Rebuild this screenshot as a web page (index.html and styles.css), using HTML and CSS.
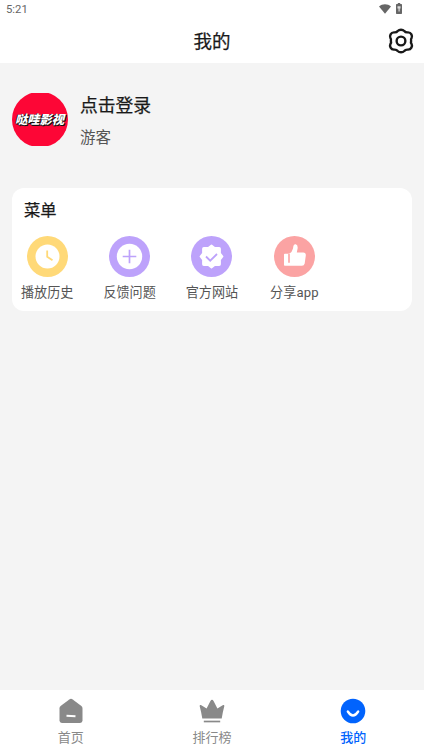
FILE: index.html
```html
<!DOCTYPE html>
<html lang="zh-CN">
<head>
<meta charset="utf-8">
<title>我的</title>
<link rel="stylesheet" href="styles.css">
</head>
<body>
<div class="app">
  <header class="top">
    <div class="status">
      <span class="time">5:21</span>
      <svg class="wifi" width="12" height="10" viewBox="0 0 12 10"><path d="M0 2.400C3.400-.5 8.600-.5 12 2.400L6 9.800z"/></svg>
      <svg class="battery" width="6" height="11" viewBox="0 0 6 11"><path d="M1.800 0h2.400v1H5.300q.7 0 .7.700v8.600q0 .7-.7.700H.7q-.7 0-.7-.7V1.700Q0 1 .7 1H1.800z"/><path class="bolt" d="M1.500 3.200h3v2.300h-.8v2.900H2.500V5.500h-1z"/></svg>
    </div>
    <div class="bar">
      <h1>我的</h1>
      <svg class="gear" width="26" height="26" viewBox="0.500 0.500 25 25"><path d="M9.800 3.400Q11 2.200 13 2.200T16.200 3.400Q17.300 5 19.800 4.700Q22 4.700 23 6.600T23.200 10Q22.200 11.500 22.700 13Q22.200 14.500 23.200 16Q24 17.500 23 19.400T19.800 21.300Q17.300 21 16.200 22.600Q15 23.800 13 23.800T9.800 22.600Q8.700 21 6.200 21.300Q4 21.300 3 19.400T2.800 16Q3.800 14.500 3.300 13Q3.800 11.500 2.800 10Q2 8.500 3 6.600T6.200 4.700Q8.700 5 9.800 3.400z"/><circle cx="13" cy="13" r="4.200"/></svg>
    </div>
  </header>

  <main>
    <section class="profile">
      <div class="avatar"><span>哒哇影视</span></div>
      <div class="user">
        <div class="login">点击登录</div>
        <div class="guest">游客</div>
      </div>
    </section>

    <section class="card">
      <h2>菜单</h2>
      <div class="menu">
        <div class="item">
          <svg class="icon" viewBox="0 0 41 41"><circle cx="20.500" cy="20.500" r="20.500" fill="#ffd978"/><circle cx="20.500" cy="20.500" r="12" fill="#fff"/><path d="M20.200 14.500v6.200l5.300 3.500" fill="none" stroke="#ffd978" stroke-width="1.800"/></svg>
          <span>播放历史</span>
        </div>
        <div class="item">
          <svg class="icon" viewBox="0 0 41 41"><circle cx="20.500" cy="20.500" r="20.500" fill="#bda2fb"/><circle cx="20.500" cy="20.500" r="12.700" fill="#fff"/><path d="M20.500 13.700v13.600M13.700 20.500h13.600" fill="none" stroke="#bda2fb" stroke-width="1.700"/></svg>
          <span>反馈问题</span>
        </div>
        <div class="item">
          <svg class="icon" viewBox="0 0 41 41"><circle cx="20.500" cy="20.500" r="20.500" fill="#bda2fb"/><path d="M20.500 9.500l3.200 2.500h4.500q.8 0 .8.800v4.500l2.500 3.200-2.500 3.200v4.500q0 .8-.8.800h-4.500l-3.200 2.500-3.200-2.500h-4.500q-.8 0-.8-.8v-4.500l-2.500-3.200 2.500-3.200v-4.500q0-.8.800-.8h4.500z" fill="#fff" stroke="#fff" stroke-width="1.800" stroke-linejoin="round"/><path d="M15 20.500l4.200 4.200 6.800-6.700" fill="none" stroke="#bda2fb" stroke-width="1.800"/></svg>
          <span>官方网站</span>
        </div>
        <div class="item">
          <svg class="icon" viewBox="0 0 41 41"><circle cx="20.500" cy="20.500" r="20.500" fill="#fba3a3"/><path d="M10 18.600q0-.8.800-.8h4.400q2.800-1.300 3.800-5.300l.4-2.500q.5-2.200 2.300-1.800 2.400.6 1.900 4.400l-.8 3.800h6.500q2.800.1 2.500 3.200l-1.100 8q-.6 2.200-2.700 2.200H10.800q-.8 0-.8-.8z" fill="#fff"/><path d="M15 18v8.800" stroke="#fba3a3" stroke-width="1.600"/></svg>
          <span class="share">分享app</span>
        </div>
      </div>
    </section>
  </main>

  <nav class="tabs">
    <div class="tab">
      <svg width="26" height="26" viewBox="0 0 26 26"><path d="M11.300 1.400q1.700-1.200 3.400 0l8.700 6.700q1.100.9 1.100 2.300v12.200q0 2.400-2.400 2.400H3.900q-2.400 0-2.400-2.400V10.400q0-1.400 1.100-2.300z" fill="#898989"/><path d="M8.500 17.800l9 .5" stroke="#fff" stroke-width="2"/></svg>
      <span>首页</span>
    </div>
    <div class="tab">
      <svg width="26" height="26" viewBox="0 0 26 26"><path d="M3.300 20.500Q2.300 14 .7 8.200q-.2-1.500 1.200-1.100L7.600 10.500 11.300 3.200q1.700-2.800 3.400 0l3.700 7.300 5.700-3.400q1.400-.4 1.200 1.100Q23.700 14 22.700 20.500z" fill="#898989"/><path d="M4.800 23.500h16.400" stroke="#898989" stroke-width="1.700"/></svg>
      <span>排行榜</span>
    </div>
    <div class="tab active">
      <svg width="26" height="26" viewBox="0 0 26 26"><circle cx="13" cy="13" r="12.300" fill="#0163fd"/><path d="M7.800 13.500Q13 21.500 18.200 13.500" fill="none" stroke="#fff" stroke-width="2.300" stroke-linecap="round"/></svg>
      <span>我的</span>
    </div>
  </nav>
</div>
</body>
</html>
```

FILE: styles.css
```css
* { box-sizing: border-box; }
body {
  margin: 0;
  background: #f4f4f4;
  color: #191919;
  font-family: "Noto Sans CJK SC", sans-serif;
}
h1, h2 { margin: 0; font-weight: 400; }
h1, h2, .login { -webkit-text-stroke: .25px currentColor; }
svg { display: block; flex: none; }
.app { height: 754px; display: flex; flex-direction: column; }
.top { height: 63px; background: #fff; }
.status {
  height: 18px;
  display: flex;
  align-items: center;
  padding: 0 22px 0 6px;
}
.time { flex: 1; padding-top: 1px; color: #666; font: 11.300px/18px Roboto, sans-serif; }
.status svg { fill: #666; }
.wifi { margin-right: 5px; }
.status .battery { margin-top: -1px; }
.status .bolt { fill: #ddd; }
.bar {
  height: 45px;
  display: grid;
  grid-template-columns: 26px 1fr 26px;
  align-items: center;
  padding: 0 10px;
}
.bar h1 { grid-column: 2; text-align: center; font-size: 18.500px; line-height: 45px; }
.gear { fill: none; stroke: #191919; stroke-width: 2.300; }
main { flex: 1; padding: 30px 12px 0; }
.profile { display: flex; height: 95px; }
.avatar {
  width: 56px;
  height: 53px;
  display: flex;
  align-items: center;
  justify-content: center;
  background: #fd0636;
  clip-path: circle(28px at 50% 50%);
}
.avatar span {
  margin: -2px 1px 0 0;
  color: #fff;
  font-size: 12.300px;
  font-weight: 900;
  font-style: italic;
  line-height: 18px;
  white-space: nowrap;
  text-shadow: 1px 1px 0 #111, -1px 0 0 #111, 0 1px 0 #111;
}
.user { margin-left: 12px; margin-top: -1px; }
.login { font-size: 17.800px; line-height: 24px; }
.guest { margin-top: 9px; font-size: 15.500px; line-height: 22px; color: #555; }
.card {
  height: 123px;
  background: #fff;
  border-radius: 12px;
  padding-top: 9px;
}
.card h2 { padding-left: 12px; font-size: 16.300px; line-height: 24px; }
.menu { display: grid; grid-template-columns: repeat(4, 82.400px); margin: 15px 0 0 -6px; }
.item { display: flex; flex-direction: column; align-items: center; }
.icon { width: 41px; height: 41px; }
.item span { margin-top: 5px; font-size: 13.100px; line-height: 20px; color: #555; }
.item .share { margin-top: 6px; font-family: Roboto, "Noto Sans CJK SC", sans-serif; letter-spacing: .1px; }
.tabs {
  height: 64px;
  background: #fff;
  display: grid;
  grid-template-columns: repeat(3, 1fr);
  padding-top: 8px;
}
.tab { display: flex; flex-direction: column; align-items: center; color: #898989; }
.tab span { margin-top: 3px; font-size: 13px; line-height: 20px; }
.active { color: #0163fd; }
.active span { font-weight: 500; }
```
